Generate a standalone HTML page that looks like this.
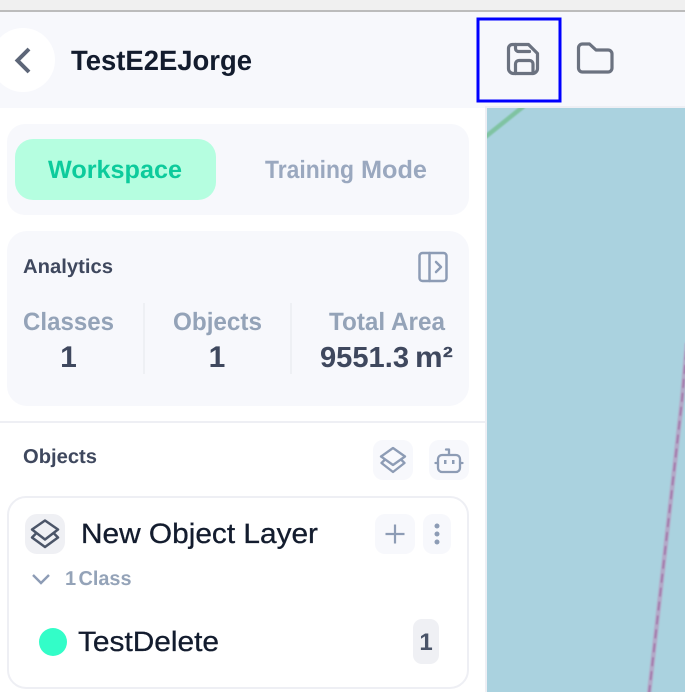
<!DOCTYPE html>
<html>
<head>
<meta charset="utf-8">
<style>
html,body{margin:0;padding:0;width:685px;height:692px;overflow:hidden;background:#fff}
svg{display:block}
text{font-family:"Liberation Sans",sans-serif;text-rendering:geometricPrecision}
.b{font-weight:700}
</style>
</head>
<body>
<svg width="685" height="692" viewBox="0 0 685 692" xmlns="http://www.w3.org/2000/svg">
<defs>
<clipPath id="m"><rect x="487" y="108" width="198" height="584"/></clipPath>
<filter id="bl" x="-10%" y="-10%" width="120%" height="120%"><feGaussianBlur stdDeviation="0.7"/></filter>
</defs>
<rect width="685" height="10" fill="#f0f0f0"/>
<rect y="10" width="685" height="2" fill="#bcbcbc"/>
<rect y="12" width="685" height="96" fill="#f7f8fc"/>
<rect y="108" width="485" height="584" fill="#fff"/>
<rect x="485" y="106" width="200" height="2" fill="#eeeff4"/>
<rect x="485" y="108" width="2" height="584" fill="#eeeff4"/>
<rect x="487" y="108" width="198" height="584" fill="#aad2df"/>
<g clip-path="url(#m)" fill="none">
<g filter="url(#bl)">
<path d="M484 138L524 106" stroke="#7fc3a2" stroke-width="4.500"/>
<path d="M649 694L682 400L687 343" stroke="#b3a9c8" stroke-width="4.500"/>
<path d="M649 694L682 400L687 343" stroke="#a273a8" stroke-width="1.800" stroke-dasharray="9 5"/>
</g>
</g>

<circle cx="23" cy="60" r="32" fill="#fff"/>
<path d="M29 49L17.500 60.500L29 72" fill="none" stroke="#5d6678" stroke-width="4"/>
<text x="71" y="70" class="b" font-size="28" fill="#131c2e" textLength="181" lengthAdjust="spacingAndGlyphs">TestE2EJorge</text>

<rect x="478" y="19" width="82" height="82" fill="none" stroke="#0000ff" stroke-width="3"/>
<g fill="none" stroke="#6b7280" stroke-width="3.200" stroke-linecap="round" stroke-linejoin="round">
<path d="M512.500 44.500H528.500L537.500 53.500V68.500A5 5 0 0 1 532.500 73.500H513.500A5 5 0 0 1 508.500 68.500V48.500A4 4 0 0 1 512.500 44.500Z"/>
<path d="M515.500 44.500V48.500A3 3 0 0 0 518.500 51.500H529.500"/>
<path d="M515.500 73.500V64A3.500 3.500 0 0 1 519 60.500H529.500A3.500 3.500 0 0 1 533 64V73.500"/>
<path d="M582.500 44H589.500L596 50H608A4 4 0 0 1 612 54V68A4 4 0 0 1 608 72H582.500A4 4 0 0 1 578.500 68V48A4 4 0 0 1 582.500 44Z"/>
</g>

<rect x="7" y="124" width="462" height="91" rx="18" fill="#f7f8fc"/>
<rect x="15" y="139" width="201" height="61" rx="18" fill="#b5fee0"/>
<text x="48" y="178" class="b" font-size="25" fill="#0dcb9c" textLength="134" lengthAdjust="spacingAndGlyphs">Workspace</text>
<text x="265" y="178" class="b" font-size="25" fill="#9aa8bf" textLength="89" lengthAdjust="spacingAndGlyphs">Training</text>
<text x="361" y="178" class="b" font-size="25" fill="#9aa8bf" textLength="66" lengthAdjust="spacingAndGlyphs">Mode</text>

<rect x="7" y="231" width="462" height="175" rx="20" fill="#f7f8fc"/>
<text x="23" y="273" class="b" font-size="20" fill="#3f485e" textLength="90" lengthAdjust="spacingAndGlyphs">Analytics</text>
<g fill="none" stroke="#8d9cb5" stroke-width="2.500" stroke-linejoin="round" stroke-linecap="round">
<rect x="419.500" y="253" width="27" height="28" rx="3"/>
<path d="M429.500 253V281"/>
<path d="M436 262L441 267L436 272"/>
</g>
<text x="23" y="330" class="b" font-size="25" fill="#94a3b8" textLength="91" lengthAdjust="spacingAndGlyphs">Classes</text>
<text x="173" y="330" class="b" font-size="25" fill="#94a3b8" textLength="89" lengthAdjust="spacingAndGlyphs">Objects</text>
<text x="329" y="330" class="b" font-size="25" fill="#94a3b8" textLength="116" lengthAdjust="spacingAndGlyphs">Total Area</text>
<rect x="143" y="303" width="2" height="71" fill="#eef0f4"/>
<rect x="290" y="303" width="2" height="71" fill="#eef0f4"/>
<text x="68.500" y="367" class="b" font-size="30" fill="#3f485e" text-anchor="middle">1</text>
<text x="217" y="367" class="b" font-size="30" fill="#3f485e" text-anchor="middle">1</text>
<text x="320" y="367" class="b" font-size="29" fill="#3f485e" textLength="89" lengthAdjust="spacingAndGlyphs">9551.3</text>
<text x="415" y="367" class="b" font-size="29" fill="#3f485e" textLength="38" lengthAdjust="spacingAndGlyphs">m²</text>

<rect y="421" width="485" height="2" fill="#eeeff4"/>
<text x="23" y="463" class="b" font-size="20" fill="#3f485e" textLength="74" lengthAdjust="spacingAndGlyphs">Objects</text>
<rect x="373" y="440" width="40" height="40" rx="10" fill="#f7f8fc"/>
<rect x="429" y="440" width="40" height="40" rx="10" fill="#f7f8fc"/>
<g fill="none" stroke="#8d9cb5" stroke-width="2.300" stroke-linejoin="round" stroke-linecap="round">
<path d="M393 448L405 456.500L393 465L381 456.500Z"/>
<path d="M384.500 460L381.500 463L393 472L404.500 463L401.500 460"/>
<rect x="438" y="455" width="22" height="17" rx="4"/>
<path d="M449 455V449.500H446M435.500 463H438M460 463H462.500"/>
</g>
<rect x="444" y="460" width="2.500" height="4" fill="#8d9cb5"/>
<rect x="452" y="460" width="2.500" height="4" fill="#8d9cb5"/>

<rect x="8" y="497" width="460" height="191" rx="18" fill="#fff" stroke="#eeeff4" stroke-width="2"/>
<rect x="25" y="514" width="40" height="40" rx="12" fill="#eff0f4"/>
<g fill="none" stroke="#4b5568" stroke-width="2.500" stroke-linejoin="round" stroke-linecap="round">
<path d="M45 520.500L58 529.500L45 539.500L32 529.500Z"/>
<path d="M35.500 534L32 537.500L45 547L58 537.500L54.500 534"/>
</g>
<text x="81" y="543" font-size="28" fill="#131c2e" stroke="#131c2e" stroke-width="0.300" textLength="237" lengthAdjust="spacingAndGlyphs">New Object Layer</text>
<rect x="375" y="514" width="40" height="40" rx="10" fill="#f7f8fc"/>
<rect x="423" y="514" width="28" height="40" rx="10" fill="#f7f8fc"/>
<path d="M395 524.500V543.500M385.500 534H404.500" stroke="#8d9cb5" stroke-width="2.200" fill="none"/>
<circle cx="437" cy="526" r="2.500" fill="#8d9cb5"/>
<circle cx="437" cy="534" r="2.500" fill="#8d9cb5"/>
<circle cx="437" cy="542" r="2.500" fill="#8d9cb5"/>
<path d="M33 575L41 583L49 575" fill="none" stroke="#8d9cb5" stroke-width="2.400"/>
<text x="65" y="585" class="b" font-size="20" fill="#94a3b8">1</text>
<text x="78.500" y="585" class="b" font-size="20" fill="#94a3b8" textLength="53" lengthAdjust="spacingAndGlyphs">Class</text>
<circle cx="53" cy="642" r="14" fill="#33fdc8"/>
<text x="78" y="651" font-size="28" fill="#131c2e" stroke="#131c2e" stroke-width="0.300" textLength="141" lengthAdjust="spacingAndGlyphs">TestDelete</text>
<rect x="413" y="619" width="26" height="45" rx="9" fill="#eff0f4"/>
<text x="426" y="650" class="b" font-size="24" fill="#4a5468" text-anchor="middle">1</text>
</svg>
</body>
</html>
